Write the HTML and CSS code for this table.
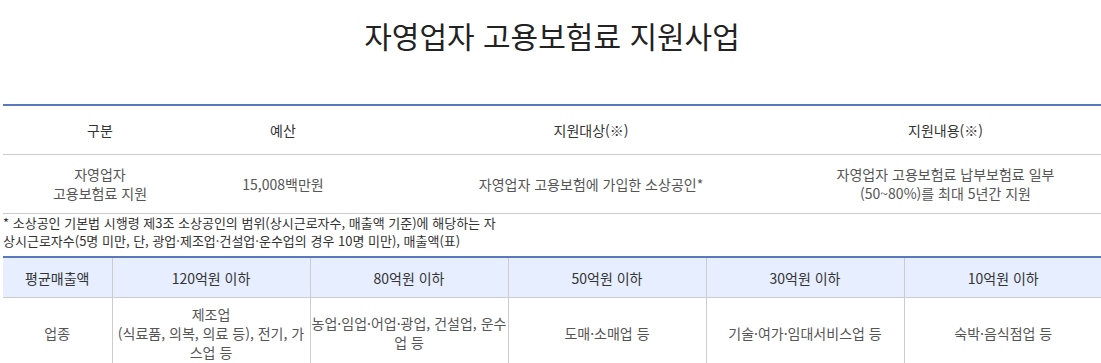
FILE: index.html
```html
<!DOCTYPE html>
<html lang="ko">
<head>
<meta charset="utf-8">
<title>자영업자 고용보험료 지원사업</title>
<link rel="stylesheet" href="styles.css">
</head>
<body>
<div class="page">
  <h1 class="title">자영업자 고용보험료 지원사업</h1>
  <table class="tbl tbl-support">
    <colgroup>
      <col class="c1"><col class="c2"><col class="c3"><col class="c4">
    </colgroup>
    <thead>
      <tr>
        <th>구분</th>
        <th>예산</th>
        <th>지원대상(※)</th>
        <th class="last">지원내용(※)</th>
      </tr>
    </thead>
    <tbody>
      <tr>
        <td>자영업자<br>고용보험료 지원</td>
        <td>15,008백만원</td>
        <td>자영업자 고용보험에 가입한 소상공인*</td>
        <td class="last">자영업자 고용보험료 납부보험료 일부<br>(50~80%)를 최대 5년간 지원</td>
      </tr>
    </tbody>
  </table>
  <p class="note">* 소상공인 기본법 시행령 제3조 소상공인의 범위(상시근로자수, 매출액 기준)에 해당하는 자<br>상시근로자수(5명 미만, 단, 광업·제조업·건설업·운수업의 경우 10명 미만), 매출액(표)</p>
  <table class="tbl tbl-sales">
    <colgroup>
      <col class="s1"><col class="s2"><col class="s2"><col class="s2"><col class="s2"><col class="s2">
    </colgroup>
    <thead>
      <tr>
        <th>평균매출액</th>
        <th>120억원 이하</th>
        <th>80억원 이하</th>
        <th>50억원 이하</th>
        <th>30억원 이하</th>
        <th>10억원 이하</th>
      </tr>
    </thead>
    <tbody>
      <tr>
        <td>업종</td>
        <td>제조업<br>(식료품, 의복, 의료 등), 전기, 가스업 등</td>
        <td>농업·임업·어업·광업, 건설업, 운수업 등</td>
        <td>도매·소매업 등</td>
        <td>기술·여가·임대서비스업 등</td>
        <td>숙박·음식점업 등</td>
      </tr>
    </tbody>
  </table>
</div>
</body>
</html>
```
FILE: styles.css
```css
html, body {
  margin: 0;
  padding: 0;
  background: #fff;
}
body {
  font-family: "Noto Sans CJK KR", "Noto Sans", sans-serif;
  color: #555;
  overflow: hidden;
}
.page {
  padding-left: 3px;
}
.title {
  margin: 0;
  padding-top: 15px;
  font-size: 30px;
  line-height: 40px;
  font-weight: 400;
  color: #222;
  text-align: center;
}
.tbl {
  width: 1098px;
  border-collapse: collapse;
  table-layout: fixed;
  border-top: 2px solid #5b78bd;
  font-size: 14px;
}
.tbl th, .tbl td {
  text-align: center;
  vertical-align: middle;
  padding: 0 3px;
  border-bottom: 1px solid #ccc;
}
.tbl th {
  font-weight: 400;
  color: #333;
}
.tbl-support {
  margin-top: 49px;
}
.tbl-support .c1 { width: 194px; }
.tbl-support .c2 { width: 172px; }
.tbl-support .c3 { width: 444px; }
.tbl-support .c4 { width: 288px; }
.tbl-support th {
  height: 48px;
}
.tbl-support td {
  height: 58px;
  line-height: 19px;
}
.tbl-support .last {
  padding-right: 26px;
}
.note {
  margin: 0;
  padding: 0;
  font-size: 13px;
  line-height: 18px;
  color: #333;
  height: 42px;
}
.tbl-sales .s1 { width: 109px; }
.tbl-sales .s2 { width: 198px; }
.tbl-sales th {
  height: 39px;
  background: #e6eeff;
}
.tbl-sales th + th, .tbl-sales td + td {
  border-left: 1px solid #ccc;
}
.tbl-sales td {
  height: 70px;
  line-height: 19px;
  padding: 0;
}
```
